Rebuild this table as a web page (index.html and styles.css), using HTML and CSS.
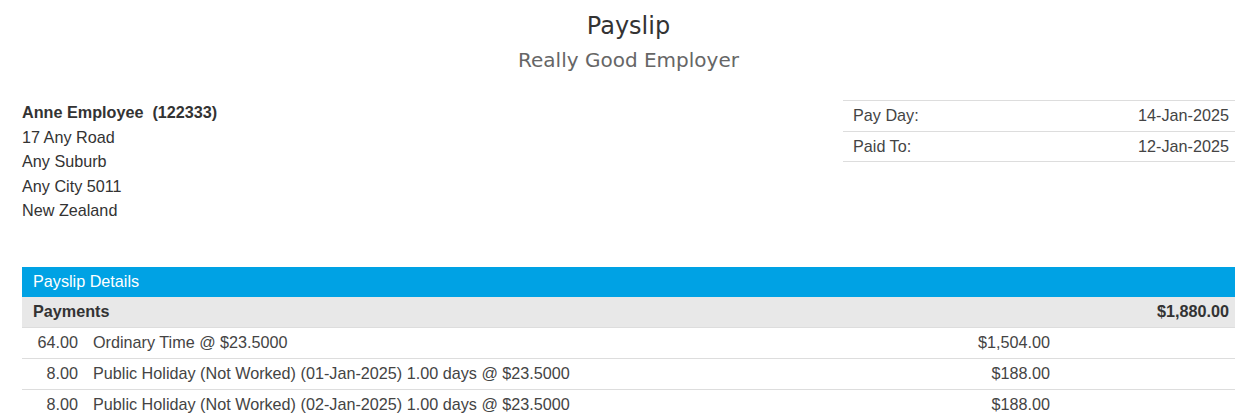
FILE: index.html
```html
<!DOCTYPE html>
<html lang="en">
<head>
    <meta charset="UTF-8">
    <meta name="viewport" content="width=device-width, initial-scale=1.0">
    <title>Payslip</title>
    <link rel="stylesheet" href="styles.css">
</head>
<body>
    <div class="page">
        <div class="title">
            <h1>Payslip</h1>
            <h2>Really Good Employer</h2>
        </div>

        <div class="header">
            <div class="address">
                <div class="name">Anne Employee&nbsp; (122333)</div>
                <div>17 Any Road</div>
                <div>Any Suburb</div>
                <div>Any City 5011</div>
                <div>New Zealand</div>
            </div>
            <table class="dates">
                <tr>
                    <td>Pay Day:</td>
                    <td class="val">14-Jan-2025</td>
                </tr>
                <tr>
                    <td>Paid To:</td>
                    <td class="val">12-Jan-2025</td>
                </tr>
            </table>
        </div>

        <table class="details">
            <colgroup>
                <col class="c-qty">
                <col>
                <col class="c-amt">
                <col class="c-total">
            </colgroup>
            <tr class="bar">
                <td colspan="4">Payslip Details</td>
            </tr>
            <tr class="group">
                <td colspan="3">Payments</td>
                <td class="total">$1,880.00</td>
            </tr>
            <tr class="line">
                <td class="qty">64.00</td>
                <td class="desc">Ordinary Time @ $23.5000</td>
                <td class="amt">$1,504.00</td>
                <td></td>
            </tr>
            <tr class="line">
                <td class="qty">8.00</td>
                <td class="desc">Public Holiday (Not Worked) (01-Jan-2025) 1.00 days @ $23.5000</td>
                <td class="amt">$188.00</td>
                <td></td>
            </tr>
            <tr class="line">
                <td class="qty">8.00</td>
                <td class="desc">Public Holiday (Not Worked) (02-Jan-2025) 1.00 days @ $23.5000</td>
                <td class="amt">$188.00</td>
                <td></td>
            </tr>
        </table>
    </div>
</body>
</html>
```

FILE: styles.css
```css
/* ===== General ===== */
body {
    margin: 0;
    font-family: "Liberation Sans", Arial, sans-serif;
    font-size: 16.2px;
    color: #333;
    background: #fff;
}

.page {
    padding: 0 11px 0 22px;
}

/* ===== Title ===== */
.title {
    text-align: center;
    padding-top: 10px;
}

.title h1 {
    margin: 0;
    font-family: "DejaVu Sans", Verdana, sans-serif;
    font-weight: normal;
    font-size: 24px;
    line-height: 32px;
    color: #333;
}

.title h2 {
    margin: 3px 0 0;
    font-family: "DejaVu Sans", Verdana, sans-serif;
    font-weight: normal;
    font-size: 20px;
    line-height: 30px;
    color: #666;
}

/* ===== Header ===== */
.header {
    display: flex;
    justify-content: space-between;
    align-items: flex-start;
    margin-top: 25px;
}

.address {
    line-height: 24.5px;
}

.address .name {
    font-weight: bold;
}

table {
    border-collapse: collapse;
}

.dates {
    width: 392px;
    border-top: 1px solid #ddd;
}

.dates td {
    height: 29.5px;
    padding: 0 6px 0 10px;
    border-bottom: 1px solid #ddd;
    color: #444;
}

.dates .val {
    text-align: right;
}

/* ===== Details ===== */
.details {
    width: 100%;
    table-layout: fixed;
    margin-top: 44px;
}

.c-qty {
    width: 64px;
}

.c-amt {
    width: 160px;
}

.c-total {
    width: 179px;
}

.details td {
    height: 29.75px;
    padding: 0;
    white-space: nowrap;
}

.bar td {
    height: 30px;
    background: #00a2e4;
    color: #fff;
    padding-left: 11px;
}

.group td {
    height: 30.5px;
    background: #e8e8e8;
    font-weight: bold;
    padding-left: 11px;
    border-bottom: 1px solid #ddd;
}

.group .total {
    text-align: right;
    padding-right: 6px;
}

.line td {
    border-bottom: 1px solid #ddd;
    color: #444;
}

.line .qty {
    text-align: right;
    padding-right: 8px;
}

.line .desc {
    padding-left: 7px;
}

.line .amt {
    text-align: right;
    padding-right: 6px;
}
```
